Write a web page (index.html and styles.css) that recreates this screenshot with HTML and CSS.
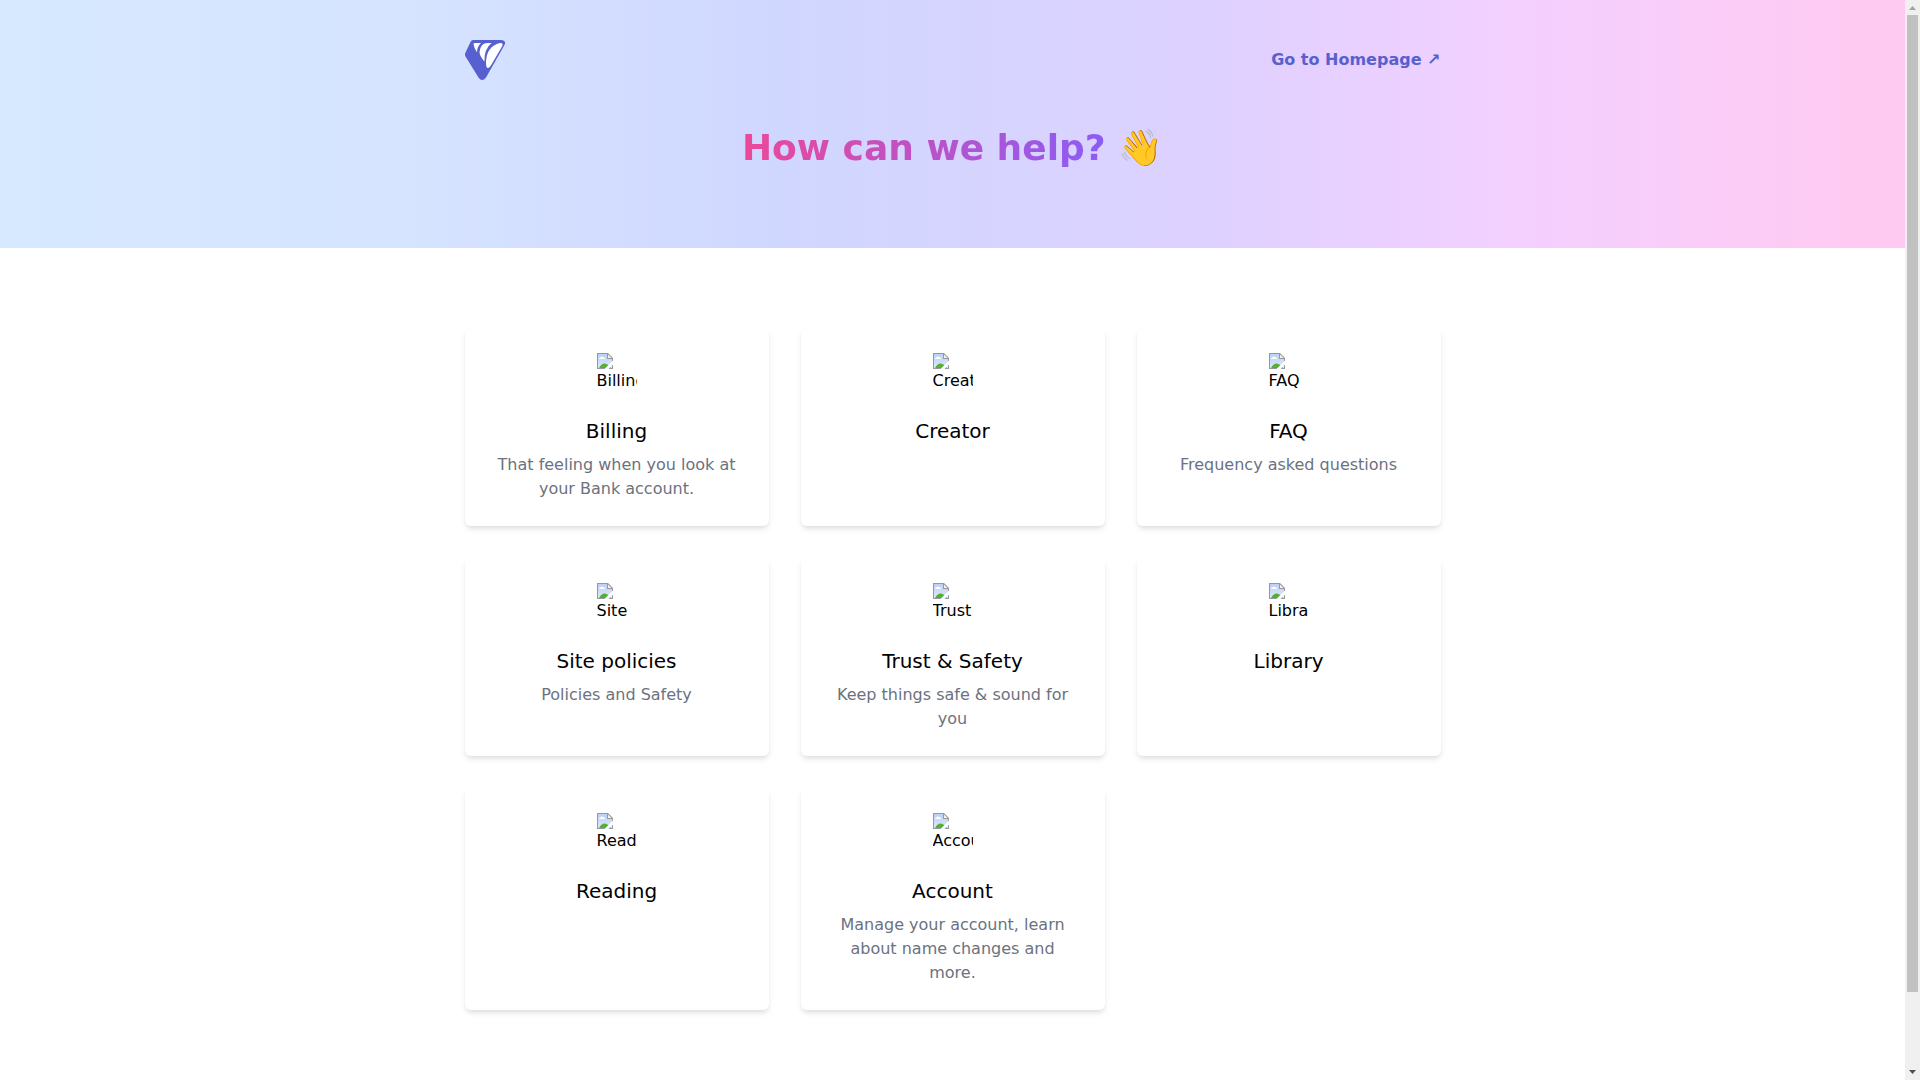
FILE: index.html
```html
<!DOCTYPE html>
<html lang="en">
<head>
<meta charset="utf-8"/>
<meta name="viewport" content="width=device-width, initial-scale=1"/>
<title>Help Center</title>
<link rel="stylesheet" href="styles.css">
</head>
<body>
<svg class="sprite" aria-hidden="true">
  <linearGradient id="sky" x1="0" y1="0" x2="0" y2="1">
    <stop offset="0" stop-color="#bcd0f5"/>
    <stop offset="1" stop-color="#dce8fb"/>
  </linearGradient>
  <symbol id="picture" viewBox="0 0 16 16">
    <path d="M0 0h11l5 5v11H0z" fill="#999"/>
    <path d="M1 1h9v5h5v9H1z" fill="url(#sky)"/>
    <path d="M11 1.500v3.500h3.500z" fill="#f4f4f4"/>
    <path d="M2 6c0-1 1-1.500 1.500-1.500C4 3 6 3 6.500 4.500 7.500 4.500 8 5 8 6z" fill="#fff"/>
    <path d="M2 15c1.500-3 3.500-4.500 5.500-4.500S12 12 14 15z" fill="#57ad35"/>
    <path d="M16 7.500v4L11.500 16h-4z" fill="#fff"/>
  </symbol>
</svg>

<div class="page">
  <header class="hero">
    <div class="container">
      <nav class="nav">
        <a href="#" class="logo" aria-label="Home">
          <svg viewBox="0 0 40 40" width="40" height="40">
            <path d="M8 0H36.500Q41.500 .5 39.500 5L21 37.500Q17 42.500 13.500 37.500L.5 16.500Q-.5 14.500 .5 12.500L5.500 2Q6.500 0 8 0Z" fill="#5860d0"/>
            <path d="M8.500 4Q8.500 3 10 3H16Q12 6.500 12 12.500Q9 8.500 8.500 4Z" fill="#fff"/>
            <path d="M26.500 3Q19 9 19.500 21.500Q14.500 16 14.500 12Q15.500 3 22.500 3Z" fill="#fff"/>
            <path d="M35 3Q38.500 2.500 37.300 6L26.500 24.500Q24 28.500 22.500 28Q21 27.500 21 22Q21.500 6.500 35 3Z" fill="#fff"/>
          </svg>
        </a>
        <a href="#" class="home-link">Go to Homepage ↗</a>
      </nav>
      <h1 class="title"><span class="title-text">How can we help?</span> <span class="wave">👋</span></h1>
    </div>
  </header>

  <main class="container main">
    <div class="grid">
      <a href="#" class="card">
        <span class="thumb"><svg><use href="#picture"/></svg>Billing</span>
        <h2>Billing</h2>
        <p>That feeling when you look at your Bank account.</p>
      </a>
      <a href="#" class="card">
        <span class="thumb"><svg><use href="#picture"/></svg>Creator</span>
        <h2>Creator</h2>
      </a>
      <a href="#" class="card">
        <span class="thumb"><svg><use href="#picture"/></svg>FAQ</span>
        <h2>FAQ</h2>
        <p>Frequency asked questions</p>
      </a>
      <a href="#" class="card">
        <span class="thumb"><svg><use href="#picture"/></svg>Site</span>
        <h2>Site policies</h2>
        <p>Policies and Safety</p>
      </a>
      <a href="#" class="card">
        <span class="thumb"><svg><use href="#picture"/></svg>Trust</span>
        <h2>Trust &amp; Safety</h2>
        <p>Keep things safe &amp; sound for you</p>
      </a>
      <a href="#" class="card">
        <span class="thumb"><svg><use href="#picture"/></svg>Libra</span>
        <h2>Library</h2>
      </a>
      <a href="#" class="card">
        <span class="thumb"><svg><use href="#picture"/></svg>Read</span>
        <h2>Reading</h2>
      </a>
      <a href="#" class="card">
        <span class="thumb"><svg><use href="#picture"/></svg>Account</span>
        <h2>Account</h2>
        <p>Manage your account, learn about name changes and more.</p>
      </a>
    </div>
  </main>
</div>

<div class="scrollbar" aria-hidden="true">
  <svg class="arrow" viewBox="0 0 15 15"><path d="M4 10L7.500 6L11 10Z" fill="#a3a3a3"/></svg>
  <div class="track"><div class="thumb-bar"></div></div>
  <svg class="arrow" viewBox="0 0 15 15"><path d="M4 5L7.500 9L11 5Z" fill="#505050"/></svg>
</div>
</body>
</html>
```
FILE: styles.css
```css
* {
    box-sizing: border-box;
    margin: 0;
}
body {
    display: flex;
    height: 100vh;
    overflow: hidden;
    font-family: 'DejaVu Sans', sans-serif;
    font-size: 16px;
    line-height: 24px;
    color: #000;
    background: #fff;
}
a {
    color: inherit;
    text-decoration: none;
}
.sprite {
    position: absolute;
    width: 0;
    height: 0;
}
.page {
    flex: 1;
    min-width: 0;
    overflow-y: auto;
    scrollbar-width: none;
}
.container {
    max-width: 1024px;
    margin: 0 auto;
    padding: 0 24px;
}
.hero {
    padding: 40px 0 80px;
    background: linear-gradient(90deg, #d6e9ff 0%, #d6e4ff 21%, #d0d7ff 41%, #ddd1ff 63%, #f3d0ff 79%, #ffcaf2 98%);
}
.nav {
    display: flex;
    align-items: center;
    justify-content: space-between;
}
.logo svg {
    display: block;
}
.home-link {
    color: #5860d0;
    font-weight: 700;
}
.title {
    margin-top: 48px;
    font-size: 36px;
    line-height: 40px;
    text-align: center;
}
.title-text {
    color: transparent;
    background: linear-gradient(to right, #ec4899, #8b5cf6);
    -webkit-background-clip: text;
    background-clip: text;
}
.wave {
    font-family: 'Noto Color Emoji', sans-serif;
    font-weight: 400;
}
.main {
    padding-top: 80px;
    padding-bottom: 152px;
}
.grid {
    display: grid;
    grid-template-columns: repeat(3, 1fr);
    gap: 32px;
}
.card {
    padding: 24px;
    text-align: center;
    border: 1px solid transparent;
    border-radius: 6px;
    box-shadow: 0 4px 6px -1px rgba(0, 0, 0, 0.1), 0 2px 4px -1px rgba(0, 0, 0, 0.06);
}
.thumb {
    display: block;
    width: 40px;
    height: 40px;
    margin: 0 auto 24px;
    overflow: hidden;
    text-align: left;
}
.thumb svg {
    display: block;
    width: 16px;
    height: 16px;
}
.card h2 {
    font-size: 20px;
    font-weight: 400;
    line-height: 28px;
}
.card p {
    margin-top: 8px;
    color: #6b7280;
}

/* scrollbar */
.scrollbar {
    display: flex;
    flex-direction: column;
    width: 15px;
    background: #f0f0f0;
}
.arrow {
    display: block;
    width: 15px;
    height: 15px;
}
.track {
    flex: 1;
    padding: 0 2px;
}
.thumb-bar {
    height: 93%;
    background: #c1c1c1;
}
@media (max-width: 768px) {
    .grid {
        grid-template-columns: 1fr;
    }
}
```
